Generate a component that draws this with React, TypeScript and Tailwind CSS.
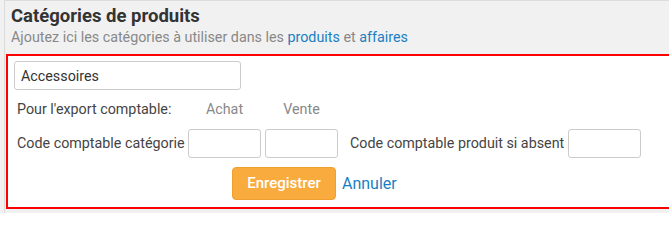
export default function App() {
  return (
    <div className="w-[669px] h-[213px] bg-[#f1f1f1] overflow-hidden font-['Roboto',sans-serif] text-[#444]">
      <div className="ml-[4px] h-full border-l border-t border-[#dcdcdc] pl-[1px]">
        <div className="pl-[5px] pt-[4px]">
          <h1 className="text-[18.5px] leading-[22px] font-bold text-[#333]">Catégories de produits</h1>
          <p className="mt-[1px] text-[14.3px] leading-[18px] text-[#888]">
            Ajoutez ici les catégories à utiliser dans les{' '}
            <a className="text-[#1a7fc1]">produits</a> et{' '}
            <a className="text-[#1a7fc1]">affaires</a>
          </p>
        </div>

        {/* Edit form */}
        <div className="mt-[8px] w-[680px] h-[155px] border-2 border-[#ff0000] bg-white pt-[5px] pl-[6px]">
          <input
            className="block w-[227px] h-[29px] rounded-[3px] border border-[#cccccc] px-[6px] text-[14.3px] text-[#333] outline-none"
            defaultValue="Accessoires"
          />

          <div className="mt-[9px] flex h-[20px] items-center text-[14.3px] leading-[20px]">
            <span className="w-[174px] pl-[3px]">Pour l'export comptable:</span>
            <span className="w-[73px] text-center text-[#888]">Achat</span>
            <span className="ml-[4px] w-[73px] text-center text-[#888]">Vente</span>
          </div>

          <div className="mt-[10px] flex items-center text-[14.3px]">
            <span className="w-[174px] pl-[3px]">Code comptable catégorie</span>
            <input className="w-[73px] h-[29px] rounded-[3px] border border-[#cccccc] outline-none" />
            <input className="ml-[4px] w-[73px] h-[29px] rounded-[3px] border border-[#cccccc] outline-none" />
            <span className="ml-[12px] w-[218px]">Code comptable produit si absent</span>
            <input className="w-[73px] h-[29px] rounded-[3px] border border-[#cccccc] outline-none" />
          </div>

          <div className="mt-[9px] flex items-center">
            <button className="ml-[218px] w-[104px] h-[33px] rounded-[4px] border border-[#f0a030] bg-[#f9ab3e] text-[15px] font-medium text-white">
              Enregistrer
            </button>
            <a className="ml-[6px] text-[16px] text-[#1a7fc1]">Annuler</a>
          </div>
        </div>
      </div>
    </div>
  );
}
